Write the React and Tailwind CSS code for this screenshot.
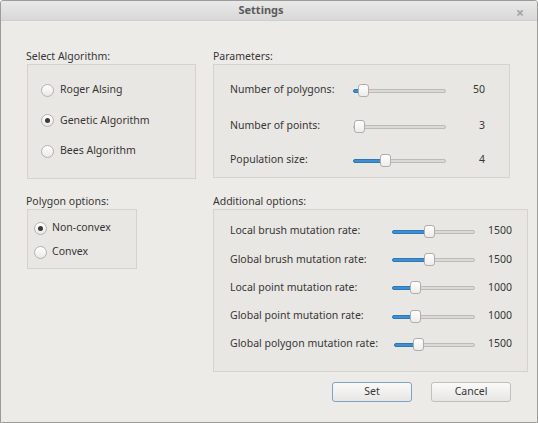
import React from "react";

const Radio = ({ checked }) => (
  <span className="relative w-[13px] h-[13px] rounded-full border border-[#b4b2ae] bg-gradient-to-b from-white to-[#ebe9e6] flex items-center justify-center shrink-0">
    {checked && <span className="w-[5px] h-[5px] rounded-full bg-[#3a3a3a]" />}
  </span>
);

const Slider = ({ width, pos }) => (
  <div className="relative h-[13px] shrink-0" style={{ width }}>
    <div className="absolute left-0 right-0 top-[5px] h-[4px] rounded-full border border-[#bdbbb8] bg-[#dcdad7]" />
    {pos > 2 && (
      <div
        className="absolute left-0 top-[5px] h-[4px] rounded-full bg-[#3f8fd2] border border-[#2f78b8]"
        style={{ width: pos + 4 }}
      />
    )}
    <div
      className="absolute top-0 w-[11px] h-[13px] rounded-[3px] border border-[#b0aeab] bg-gradient-to-b from-white to-[#eeecea]"
      style={{ left: pos }}
    />
  </div>
);

const params = [
  { label: "Number of polygons:", value: 50, pos: 5, mt: "mt-[15px]" },
  { label: "Number of points:", value: 3, pos: 1, mt: "mt-[16px]" },
  { label: "Population size:", value: 4, pos: 27, mt: "mt-[14px]" },
];

const extras = [
  { label: "Local brush mutation rate:", value: 1500, pos: 32, w: 83 },
  { label: "Global brush mutation rate:", value: 1500, pos: 32, w: 83 },
  { label: "Local point mutation rate:", value: 1000, pos: 18, w: 83 },
  { label: "Global point mutation rate:", value: 1000, pos: 18, w: 83 },
  { label: "Global polygon mutation rate:", value: 1500, pos: 19, w: 81 },
];

export default function App() {
  return (
    <div className="w-[538px] h-[423px] flex flex-col bg-[#edebe8] border border-[#9d9b98] rounded-t-[3px] overflow-hidden text-[10.5px] text-[#363636] font-['Noto_Sans',sans-serif]">
      {/* title bar */}
      <div className="h-[20px] shrink-0 flex items-center justify-center relative bg-gradient-to-b from-[#e9e9e9] to-[#d8d8d8] border-b border-[#cfcfcf]">
        <span className="font-bold text-[11px] text-[#5b5b5b] ml-[-16px]">Settings</span>
        <span className="absolute right-[13px] top-[1px] text-[14px] font-bold text-[#a3a3a3]">×</span>
      </div>

      <div className="flex pt-[28px] pl-[25px]">
        {/* left column */}
        <div className="w-[170px] flex flex-col">
          <div className="h-[15px] leading-[15px]">Select Algorithm:</div>
          <div className="ml-px h-[115px] border border-[#d6d3cf] bg-[#e9e7e3] flex flex-col pt-[10px] pl-[13px]">
            {[
              ["Roger Alsing", false],
              ["Genetic Algorithm", true],
              ["Bees Algorithm", false],
            ].map(([t, c]) => (
              <div key={t} className="h-[30.5px] flex items-center gap-[6px]">
                <Radio checked={c} />
                <span>{t}</span>
              </div>
            ))}
          </div>

          <div className="mt-[15px] h-[15px] leading-[15px]">Polygon options:</div>
          <div className="ml-px w-[110px] h-[60px] border border-[#d6d3cf] bg-[#e9e7e3] flex flex-col pt-[6px] pl-[6px]">
            {[
              ["Non-convex", true],
              ["Convex", false],
            ].map(([t, c]) => (
              <div key={t} className="h-[24px] flex items-center gap-[5px]">
                <Radio checked={c} />
                <span>{t}</span>
              </div>
            ))}
          </div>
        </div>

        {/* right column */}
        <div className="ml-[17px] flex flex-col">
          <div className="h-[15px] leading-[15px]">Parameters:</div>
          <div className="w-[297px] h-[114px] border border-[#d6d3cf] bg-[#e9e7e3] flex flex-col pl-[16px]">
            {params.map((p) => (
              <div key={p.label} className={`${p.mt} h-[20px] flex items-center`}>
                <span className="w-[123px]">{p.label}</span>
                <Slider width={93} pos={p.pos} />
                <span className="w-[39px] text-right">{p.value}</span>
              </div>
            ))}
          </div>

          <div className="mt-[16px] h-[15px] leading-[15px]">Additional options:</div>
          <div className="w-[315px] h-[163px] border border-[#d6d3cf] bg-[#e9e7e3] flex flex-col pt-[7px] pl-[16px] pr-[15px]">
            {extras.map((p) => (
              <div key={p.label} className="h-[28.3px] flex items-center">
                <span className="flex-1">{p.label}</span>
                <Slider width={p.w} pos={p.pos} />
                <span className="w-[37px] text-right">{p.value}</span>
              </div>
            ))}
          </div>

          <div className="mt-[10px] flex gap-[19px] pl-[119px]">
            <button className="w-[80px] h-[20px] rounded-[3px] border border-[#7fa3c4] bg-gradient-to-b from-[#fafafa] to-[#e7e6e4] text-[#363636]">
              Set
            </button>
            <button className="w-[80px] h-[20px] rounded-[3px] border border-[#c1bfbc] bg-gradient-to-b from-[#fafafa] to-[#e7e6e4] text-[#363636]">
              Cancel
            </button>
          </div>
        </div>
      </div>
    </div>
  );
}
